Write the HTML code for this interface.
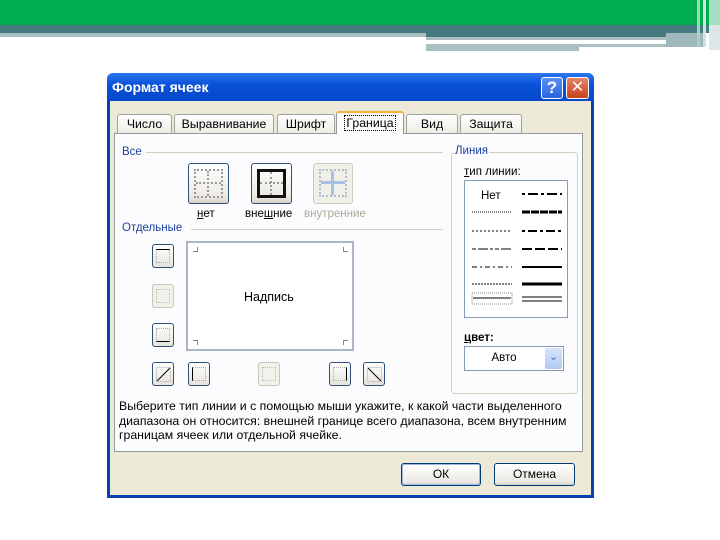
<!DOCTYPE html>
<html><head><meta charset="utf-8"><style>
*{margin:0;padding:0;box-sizing:border-box}
body{width:720px;height:540px;background:#fff;position:relative;overflow:hidden;font-family:"Liberation Sans","DejaVu Sans",sans-serif;font-size:11.5px;color:#000}
.a{position:absolute}
.btn{position:absolute;border:1px solid #1c4a8a;border-radius:3px;background:linear-gradient(#fff,#ece9e2 85%,#d6d0c4);}
.ib{position:absolute;width:22px;height:24px;border:1px solid #2c4f7c;border-radius:3px;background:linear-gradient(#fff,#e6e3da)}
.ib.d{border-color:#c9c7ba;background:#f2f1ea}
.tab{position:absolute;top:114px;height:20px;border:1px solid #a0a29a;border-bottom:none;border-radius:3px 3px 0 0;background:linear-gradient(#fff,#ecebe5);text-align:center;line-height:19px;font-size:12.3px}
.ln{position:absolute;height:0}
</style></head><body>
<!-- top bars -->
<div class="a" style="left:0;top:0;width:720px;height:25px;background:#00ae4f"></div>
<div class="a" style="left:0;top:25px;width:720px;height:8px;background:#457a80"></div>
<div class="a" style="left:0;top:33px;width:426px;height:4px;background:#a9bfc2"></div>
<div class="a" style="left:426px;top:33px;width:280px;height:4px;background:#457a80"></div>
<div class="a" style="left:426px;top:37px;width:240px;height:3px;background:#a9bfc2"></div>
<div class="a" style="left:426px;top:44px;width:153px;height:7px;background:#a9bfc2"></div>
<div class="a" style="left:579px;top:44px;width:87px;height:3px;background:#a9bfc2"></div>
<div class="a" style="left:666px;top:33px;width:40px;height:14px;background:#a0b8bc"></div>
<div class="a" style="left:697px;top:0;width:3px;height:47px;background:#9ed8b8"></div>
<div class="a" style="left:703px;top:0;width:3px;height:47px;background:#cfe3e2"></div>
<div class="a" style="left:709px;top:0;width:11px;height:25px;background:#a4e0c0"></div>
<div class="a" style="left:709px;top:25px;width:11px;height:25px;background:#dce6e8"></div>

<!-- dialog -->
<div class="a" style="left:107px;top:73px;width:487px;height:425px;background:#0a3fb0;border-radius:6px 6px 0 0"></div>
<div class="a" style="left:107px;top:73px;width:487px;height:28px;background:linear-gradient(#2b78f0,#0a52d8 40%,#0648c8);border-radius:6px 6px 0 0"></div>
<div class="a" style="left:112px;top:79px;color:#fff;font-weight:bold;font-size:14px">Формат ячеек</div>
<div class="a" style="left:541px;top:77px;width:22px;height:22px;border:1px solid #fff;border-radius:3px;background:linear-gradient(#5a92f4,#2c62dc);color:#fff;font-weight:bold;font-size:17px;text-align:center;line-height:20px">?</div>
<div class="a" style="left:566px;top:77px;width:23px;height:22px;border:1px solid #fff;border-radius:3px;background:linear-gradient(#e8856a,#c8421f);color:#fff;font-weight:bold;font-size:16px;text-align:center;line-height:20px">✕</div>
<div class="a" style="left:110px;top:101px;width:481px;height:394px;background:#ece9d8"></div>

<!-- tabs -->
<div class="tab" style="left:117px;width:55px">Число</div>
<div class="tab" style="left:174px;width:100px">Выравнивание</div>
<div class="tab" style="left:277px;width:58px">Шрифт</div>
<div class="tab" style="left:460px;width:62px">Защита</div>
<div class="tab" style="left:406px;width:52px">Вид</div>
<!-- panel -->
<div class="a" style="left:114px;top:133px;width:469px;height:319px;background:#fcfcfe;border:1px solid #919b9c"></div>
<div class="tab" style="left:336px;top:111px;width:68px;height:23px;background:#fcfcfe;border-top:2px solid #f0b436;border-color:#919b9c;border-top-color:#f0b436;line-height:20px"><span style="border:1px dotted #000;padding:0 1px">Граница</span></div>

<!-- Все -->
<div class="a" style="left:122px;top:146px;color:#1a3fa0">Все</div>
<div class="ln" style="left:146px;top:152px;width:297px;border-top:1px solid #d0d0bf"></div>
<div class="a" style="left:122px;top:222px;color:#1a3fa0">Отдельные</div>
<div class="ln" style="left:191px;top:229px;width:252px;border-top:1px solid #d0d0bf"></div>

<div class="btn" style="left:188px;top:163px;width:41px;height:41px;border-color:#2c4f7c"></div>
<div class="a" style="left:194px;top:169px;width:29px;height:29px;border:2px dotted #999"><div class="a" style="left:11px;top:0;height:25px;border-left:2px dotted #999"></div><div class="a" style="left:0;top:11px;width:25px;border-top:2px dotted #999"></div></div>
<div class="btn" style="left:251px;top:163px;width:41px;height:41px;border-color:#2c4f7c"></div>
<div class="a" style="left:257px;top:169px;width:29px;height:29px;border:3px solid #111"><div class="a" style="left:10px;top:0;height:23px;border-left:2px dotted #999"></div><div class="a" style="left:0;top:10px;width:23px;border-top:2px dotted #999"></div></div>
<div class="a" style="left:313px;top:163px;width:40px;height:41px;border:1px solid #d0cec0;border-radius:3px;background:#f0efe8"></div>
<div class="a" style="left:319px;top:169px;width:28px;height:28px;border:2px dotted #b0bcd0"><div class="a" style="left:10px;top:0;height:24px;border-left:3px solid #a7bfe6"></div><div class="a" style="left:0;top:10px;width:24px;border-top:3px solid #a7bfe6"></div></div>
<div class="a" style="left:197px;top:208px"><u>н</u>ет</div>
<div class="a" style="left:245px;top:208px">вне<u>ш</u>ние</div>
<div class="a" style="left:304px;top:208px;color:#aca899">внутренние</div>

<!-- preview -->
<div class="a" style="left:186px;top:241px;width:168px;height:110px;background:#fff;border:2px solid #a9b5c4"></div>
<div class="a" style="left:193px;top:247px;width:5px;height:5px;border-right:1px solid #888;border-bottom:1px solid #888"></div>
<div class="a" style="left:343px;top:247px;width:5px;height:5px;border-left:1px solid #888;border-bottom:1px solid #888"></div>
<div class="a" style="left:193px;top:340px;width:5px;height:5px;border-right:1px solid #888;border-top:1px solid #888"></div>
<div class="a" style="left:343px;top:340px;width:5px;height:5px;border-left:1px solid #888;border-top:1px solid #888"></div>
<div class="a" style="left:244px;top:290px;font-size:12.5px">Надпись</div>

<div class="ib" style="left:152px;top:244px"><div class="a" style="left:3px;top:4px;width:14px;height:14px;border:1px dotted #aaa;border-top:1px solid #000"></div></div>
<div class="ib d" style="left:152px;top:284px"><div class="a" style="left:3px;top:4px;width:14px;height:14px;border:1px dotted #bbb"></div></div>
<div class="ib" style="left:152px;top:323px"><div class="a" style="left:3px;top:4px;width:14px;height:14px;border:1px dotted #aaa;border-bottom:1px solid #000"></div></div>
<div class="ib" style="left:152px;top:362px"><svg class="a" style="left:3px;top:4px" width="15" height="15"><rect x=".5" y=".5" width="14" height="14" fill="none" stroke="#aaa" stroke-dasharray="1 1"/><path d="M1 14L14 1" stroke="#000"/></svg></div>
<div class="ib" style="left:188px;top:362px"><div class="a" style="left:3px;top:4px;width:14px;height:14px;border:1px dotted #aaa;border-left:1px solid #000"></div></div>
<div class="ib d" style="left:258px;top:362px"><div class="a" style="left:3px;top:4px;width:14px;height:14px;border:1px dotted #bbb"></div></div>
<div class="ib" style="left:329px;top:362px"><div class="a" style="left:3px;top:4px;width:14px;height:14px;border:1px dotted #aaa;border-right:1px solid #000"></div></div>
<div class="ib" style="left:363px;top:362px"><svg class="a" style="left:3px;top:4px" width="15" height="15"><rect x=".5" y=".5" width="14" height="14" fill="none" stroke="#aaa" stroke-dasharray="1 1"/><path d="M1 1L14 14" stroke="#000"/></svg></div>

<!-- Линия -->
<div class="a" style="left:451px;top:152px;width:127px;height:242px;border:1px solid #d0d0bf;border-radius:4px"></div>
<div class="a" style="left:454px;top:145px;background:#fcfcfe;color:#1a3fa0;padding:0 1px">Линия</div>
<div class="a" style="left:464px;top:166px"><u>т</u>ип линии:</div>
<div class="a" style="left:464px;top:180px;width:104px;height:138px;border:1px solid #7f9db9;background:#fff"></div>
<div class="a" style="left:481px;top:190px">Нет</div>
<svg class="a" style="left:470px;top:180px" width="100" height="138">
<g stroke="#000">
<path d="M52 14h40" stroke-width="2" stroke-dasharray="3 3 10 3"/>
<path d="M2 32h40" stroke-dasharray="1 1"/>
<path d="M52 32h40" stroke-width="3" stroke-dasharray="8 1"/>
<path d="M2 51h40" stroke-dasharray="2 2"/>
<path d="M52 51h40" stroke-width="2" stroke-dasharray="3 3 9 3"/>
<path d="M2 69h40" stroke-dasharray="4 2 10 2 3 2"/>
<path d="M52 69h40" stroke-width="2" stroke-dasharray="10 3"/>
<path d="M2 87h40" stroke-dasharray="5 3 2 3"/>
<path d="M52 87h40" stroke-width="2"/>
<path d="M2 104h40" stroke-dasharray="2 1"/>
<path d="M52 104h40" stroke-width="3"/>
<rect x="2" y="113" width="40" height="11" fill="none" stroke="#888" stroke-dasharray="1 1"/>
<path d="M3 118h38"/>
<path d="M52 117h40M52 121h40"/>
</g></svg>
<div class="a" style="left:464px;top:332px;font-weight:bold"><u>ц</u>вет:</div>
<div class="a" style="left:464px;top:346px;width:100px;height:25px;border:1px solid #7f9db9;background:#fff;text-align:center;line-height:23px;padding-right:20px">Авто</div>
<div class="a" style="left:545px;top:348px;width:17px;height:21px;background:linear-gradient(#d8e4fb,#b3c9f4);border-radius:2px;color:#4d6fb4;text-align:center;line-height:19px;font-size:11px">⌄</div>

<!-- description -->
<div class="a" style="left:119px;top:399px;width:462px;font-size:12.3px;line-height:14.5px">Выберите тип линии и с помощью мыши укажите, к какой части выделенного диапазона он относится: внешней границе всего диапазона, всем внутренним границам ячеек или отдельной ячейке.</div>

<div class="btn" style="left:401px;top:463px;width:80px;height:23px;border-color:#003c74;box-shadow:inset 0 0 0 1px #9fb6e8;text-align:center;line-height:21px;font-size:12px">ОК</div>
<div class="btn" style="left:494px;top:463px;width:81px;height:23px;border-color:#003c74;text-align:center;line-height:21px;font-size:12px">Отмена</div>
</body></html>
